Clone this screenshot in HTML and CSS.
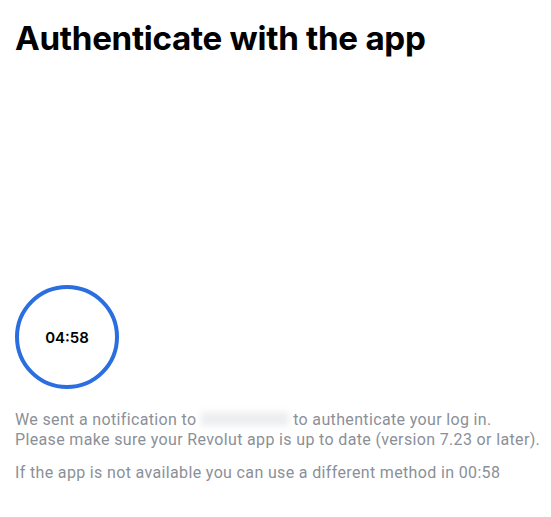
FILE: index.html
```html
<!DOCTYPE html>
<html lang="en">
<head>
<meta charset="utf-8">
<title>Authenticate with the app</title>
<link rel="stylesheet" href="styles.css">
</head>
<body>
<main class="page">
  <h1 class="title">Authenticate with the app</h1>
  <div class="timer"><span class="timer-text">04:58</span></div>
  <p class="note">We sent a notification to <span class="blur" aria-hidden="true"></span> to authenticate your log in.<br>Please make sure your Revolut app is up to date (version 7.23 or later).</p>
  <p class="note alt">If the app is not available you can use a different method in 00:58</p>
</main>
</body>
</html>
```
FILE: styles.css
```css
html, body {
  margin: 0;
  padding: 0;
  background: #ffffff;
}
.page {
  padding: 16px 4px 16px 15px;
  font-family: Inter, "Noto Sans", sans-serif;
}
.title {
  margin: 0;
  font-size: 33.2px;
  font-weight: 700;
  letter-spacing: -0.3px;
  line-height: 44px;
  color: #000;
}
.timer {
  margin-top: 225px;
  width: 96px;
  height: 96px;
  border: 4px solid #2a6ee0;
  border-radius: 50%;
  display: flex;
  align-items: center;
  justify-content: center;
}
.timer-text {
  font-size: 15px;
  font-weight: 600;
  color: #000;
}
.note {
  margin: 21px 0 0;
  font-family: Roboto, "Liberation Sans", sans-serif;
  font-size: 16px;
  letter-spacing: 0.35px;
  line-height: 20px;
  color: #8b9098;
}
.note.alt {
  margin-top: 13px;
}
.blur {
  display: inline-block;
  background: #eceef0;
  filter: blur(3px);
  width: 88px;
  height: 14px;
  vertical-align: -1px;
}
```
